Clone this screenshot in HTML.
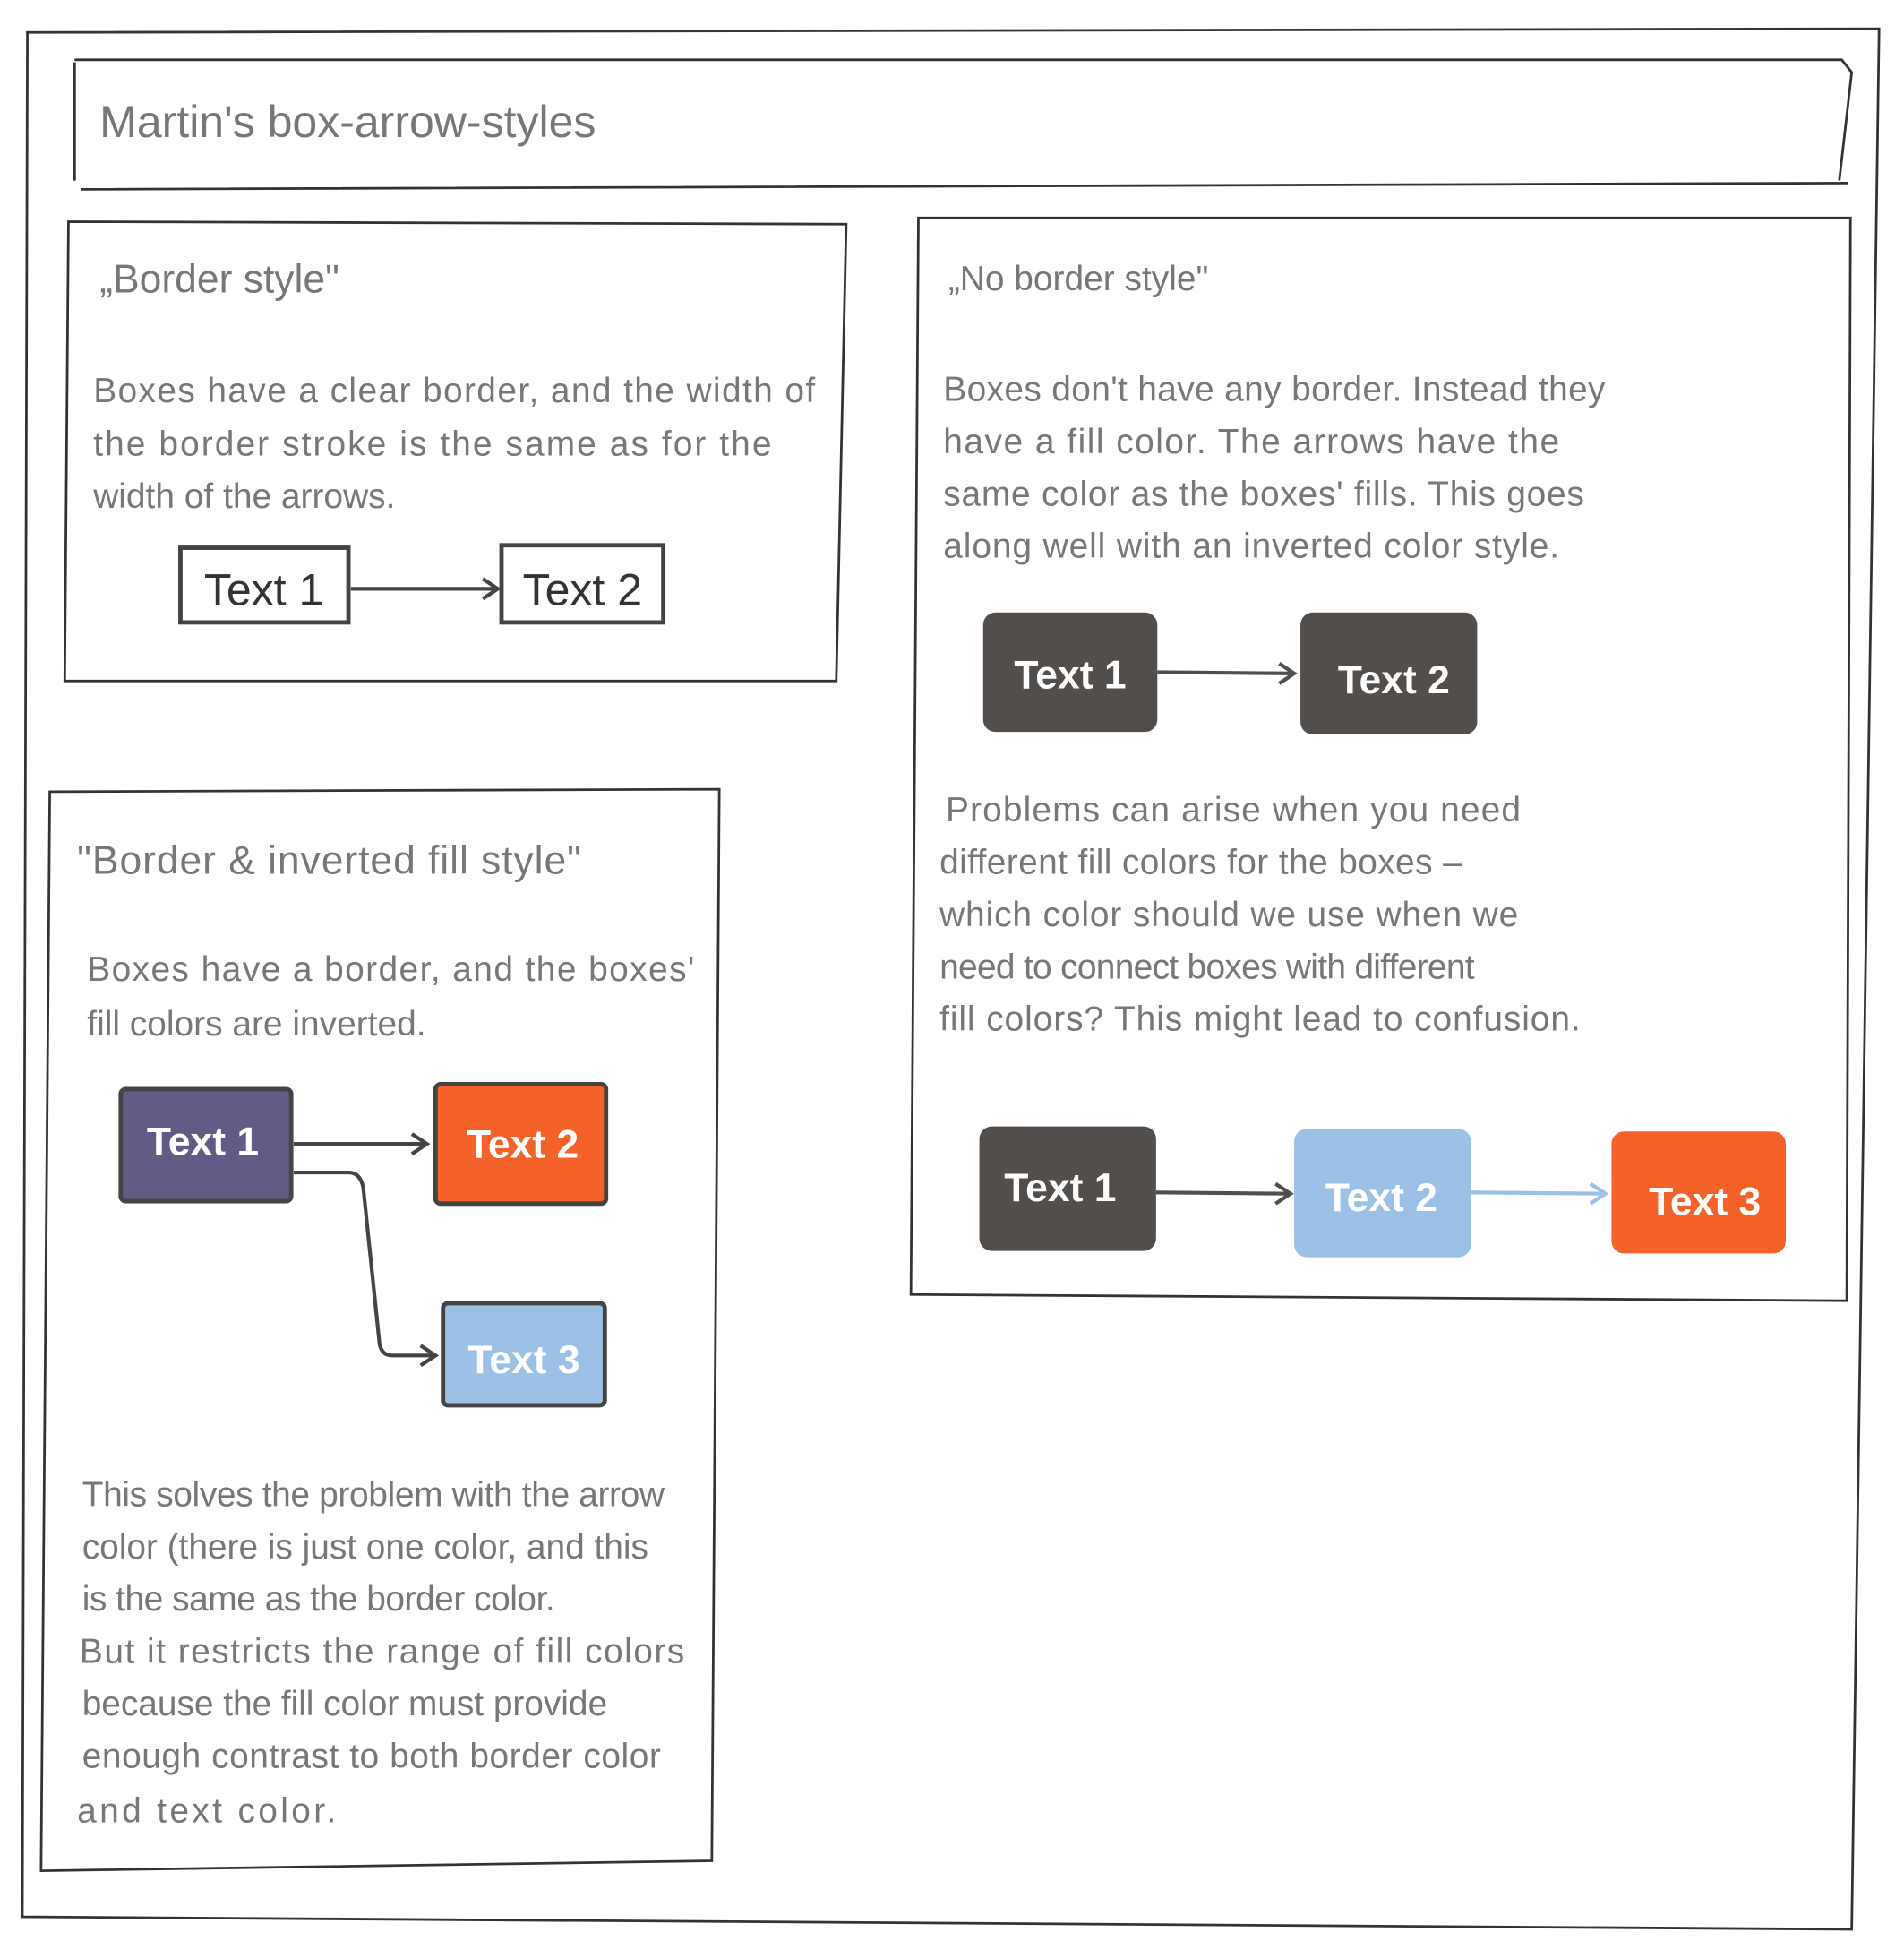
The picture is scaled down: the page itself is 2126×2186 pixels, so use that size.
<!DOCTYPE html>
<html><head><meta charset="utf-8"><style>
html,body{margin:0;padding:0;background:#fff;}
svg{display:block}
text{font-family:"Liberation Sans",sans-serif;fill:#555;}
.h{font-size:32px;fill:#777}
.b{font-size:28px;fill:#777}
.bt{font-size:32px;font-weight:bold;fill:#fff;text-anchor:middle}
.dt{font-size:36px;fill:#333;text-anchor:middle}
</style></head><body>
<svg width="2126" height="2186" viewBox="0 0 1530 1573" xmlns="http://www.w3.org/2000/svg">
<rect width="1530" height="1573" fill="#fff"/>
<g fill="none" stroke="#333" stroke-width="2">
<path d="M22 26 L1510 23 L1488 1550 L18 1540 Z"/>
<path d="M60 48 L1480 48 L1488 58 L1478 145 M60 50 L60 145 M65 152 L1485 147"/>
<path d="M55 178 L680 180 L672 547 L52 547 Z"/>
<path d="M738 175 L1487 175 L1484 1045 L732 1040 Z"/>
<path d="M40 636 L578 634 L572 1495 L33 1503 Z"/>
</g>
<text x="80" y="110" style="font-size:36px;fill:#777">Martin's  box-arrow-styles</text>

<text x="80" y="235" class="h">„Border style"</text>
<text x="75" y="323" class="b" textLength="580">Boxes have a clear border, and the width of</text>
<text x="75" y="366" class="b" textLength="545">the border stroke is the same as for the</text>
<text x="75" y="408" class="b">width of the arrows.</text>
<g stroke="#444" stroke-width="3.5" fill="#fff">
<rect x="145" y="440" width="135" height="60"/>
<rect x="403" y="438" width="130" height="62"/>
</g>
<path d="M282 473 L400 473 M388 465 L400 473 L388 481" stroke="#444" stroke-width="3" fill="none"/>
<text x="212" y="486" class="dt">Text 1</text>
<text x="468" y="486" class="dt">Text 2</text>

<text x="762" y="233" class="h" style="font-size:28px">„No border style"</text>
<text x="758" y="322" class="b" textLength="532">Boxes don't have any border. Instead they</text>
<text x="758" y="364" class="b" textLength="495">have a fill color. The arrows have the</text>
<text x="758" y="406" class="b" textLength="515">same color as the boxes' fills. This goes</text>
<text x="758" y="448" class="b" textLength="495">along well with an inverted color style.</text>
<rect x="790" y="492" width="140" height="96" rx="10" fill="#524e4b"/>
<rect x="1045" y="492" width="142" height="98" rx="10" fill="#524e4b"/>
<path d="M930 540 L1040 541 M1028 533 L1040 541 L1028 549" stroke="#524e4b" stroke-width="3" fill="none"/>
<text x="860" y="553" class="bt">Text 1</text>
<text x="1120" y="557" class="bt">Text 2</text>
<text x="760" y="660" class="b" textLength="462">Problems can arise when you need</text>
<text x="755" y="702" class="b" textLength="420">different fill colors for the boxes –</text>
<text x="755" y="744" class="b" textLength="465">which color should we use when we</text>
<text x="755" y="786" class="b" textLength="430">need to connect boxes with different</text>
<text x="755" y="828" class="b" textLength="515">fill colors? This might lead to confusion.</text>
<rect x="787" y="905" width="142" height="100" rx="10" fill="#524e4b"/>
<rect x="1040" y="907" width="142" height="103" rx="10" fill="#9bc0e6"/>
<rect x="1295" y="909" width="140" height="98" rx="10" fill="#f4622a"/>
<path d="M929 958 L1037 959 M1025 951 L1037 959 L1025 967" stroke="#524e4b" stroke-width="3" fill="none"/>
<path d="M1182 958 L1290 959 M1278 951 L1290 959 L1278 967" stroke="#9bc0e6" stroke-width="3" fill="none"/>
<text x="852" y="965" class="bt">Text 1</text>
<text x="1110" y="973" class="bt">Text 2</text>
<text x="1370" y="976" class="bt">Text 3</text>

<text x="62" y="702" class="h" textLength="405">"Border &amp; inverted fill style"</text>
<text x="70" y="788" class="b" textLength="488">Boxes have a border, and the boxes'</text>
<text x="70" y="832" class="b">fill colors are inverted.</text>
<g stroke="#444" stroke-width="3.5">
<rect x="97" y="875" width="137" height="90" rx="4" fill="#635b85"/>
<rect x="350" y="871" width="137" height="96" rx="4" fill="#f4622a"/>
<rect x="356" y="1047" width="130" height="82" rx="4" fill="#9bc0e6"/>
</g>
<path d="M236 919 L343 919 M331 911 L343 919 L331 927 M236 942 L280 942 Q290 942 292 955 L305 1080 Q307 1089 315 1089 L350 1089 M338 1081 L350 1089 L338 1097" stroke="#444" stroke-width="3" fill="none"/>
<text x="163" y="928" class="bt">Text 1</text>
<text x="420" y="930" class="bt">Text 2</text>
<text x="421" y="1103" class="bt">Text 3</text>
<text x="66" y="1210" class="b" textLength="468">This solves the problem with the arrow</text>
<text x="66" y="1252" class="b" textLength="455">color (there is just one color, and this</text>
<text x="66" y="1294" class="b" textLength="380">is the same as the border color.</text>
<text x="64" y="1336" class="b" textLength="486">But it restricts the range of fill colors</text>
<text x="66" y="1378" class="b" textLength="422">because the fill color must provide</text>
<text x="66" y="1420" class="b" textLength="465">enough contrast to both border color</text>
<text x="62" y="1464" class="b" textLength="208">and text color.</text>
</svg>
</body></html>
